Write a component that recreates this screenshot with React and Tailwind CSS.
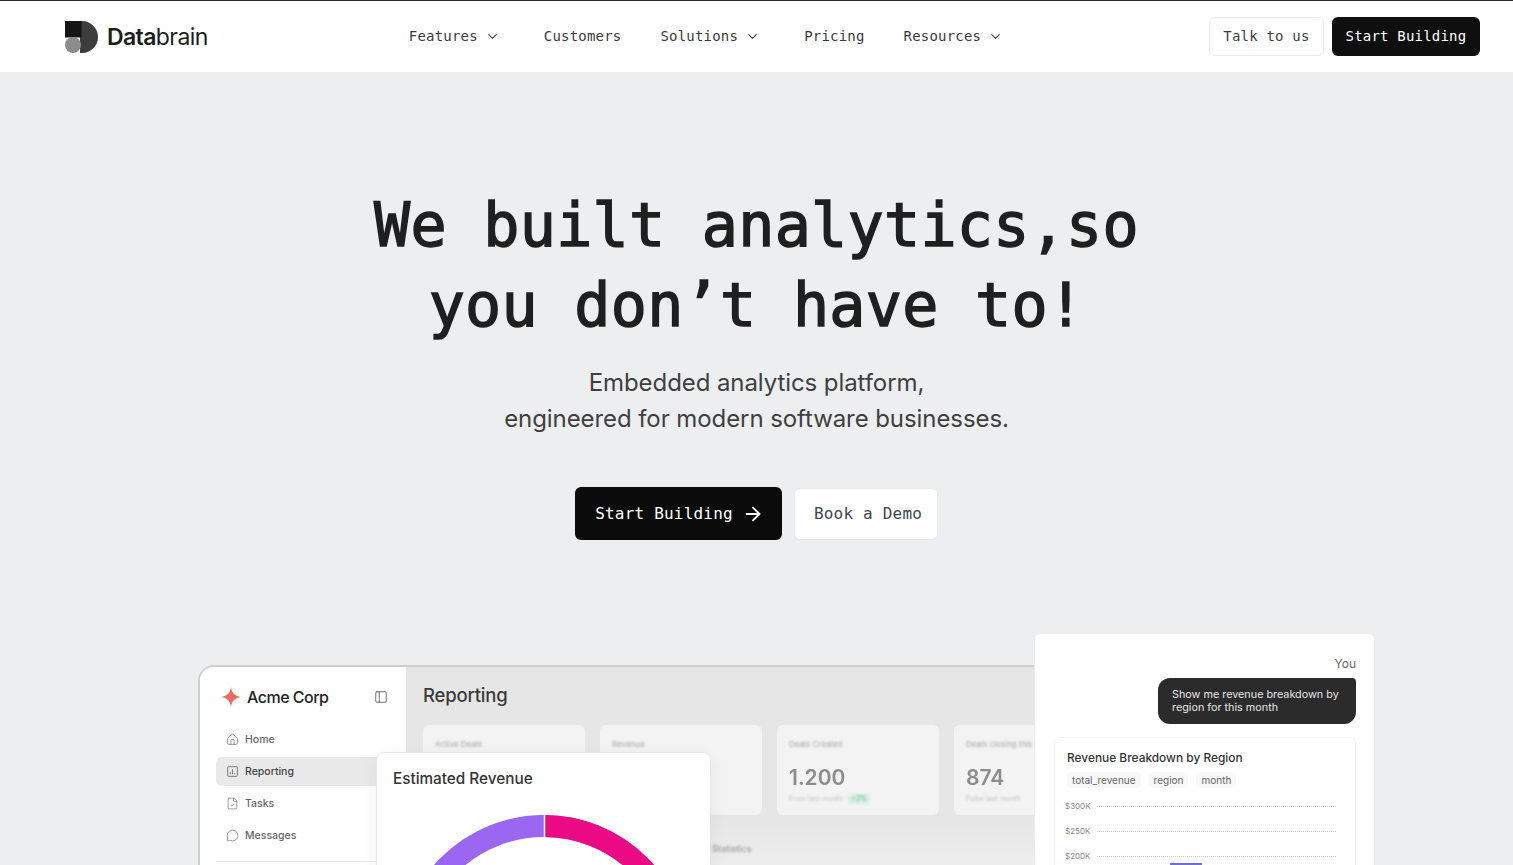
import React from 'react';
import { ArrowRight, ChevronDown, FileCheck, House, MessageCircle, PanelLeft } from 'lucide-react';

const mono = "font-['DejaVu_Sans_Mono','Liberation_Mono',monospace]";

const ReportIcon = ({ size, strokeWidth }) => (
    <svg width={size} height={size} viewBox="0 0 24 24" fill="none" stroke="currentColor" strokeWidth={strokeWidth} aria-hidden="true">
        <rect x="3" y="3" width="18" height="18" rx="2" />
        <path d="M8 17v-4M12 17V8M16 17v-2" />
    </svg>
);

const navItems = [
    { label: 'Features', menu: true },
    { label: 'Customers' },
    { label: 'Solutions', menu: true },
    { label: 'Pricing' },
    { label: 'Resources', menu: true },
];

const sideItems = [
    { label: 'Home', Icon: House },
    { label: 'Reporting', Icon: ReportIcon, active: true },
    { label: 'Tasks', Icon: FileCheck },
    { label: 'Messages', Icon: MessageCircle },
];

const stats = [
    { label: 'Active Deals' },
    { label: 'Revenue' },
    { label: 'Deals Created', value: '1.200', note: 'From last month', badge: '+3%' },
    { label: 'Deals closing this', value: '874', note: 'Pulse last month' },
];

const Logo = () => (
    <svg width="34" height="34" viewBox="0 0 34 34" aria-hidden="true">
        <path d="M16 1h2a16 16 0 0 1 0 32h-2z" fill="#3d3d3d" />
        <rect x="1" y="1" width="16.500" height="16.500" fill="#151515" />
        <circle cx="9" cy="25" r="8" fill="#8c8c8c" />
    </svg>
);

const Header = () => (
    <header className="h-[72px] bg-white border-t border-[#2b2b2b] flex items-center justify-between pl-[64px] pr-[33px]">
        <div className="flex items-center gap-[9px] w-[144px]">
            <Logo />
            <div className="font-['Inter',sans-serif] text-[23px] tracking-[-0.6px] text-[#1c1c1c] whitespace-nowrap mt-[2px]">
                <span className="font-semibold">Data</span>brain
            </div>
        </div>
        <nav className={`${mono} flex items-center gap-[39px] text-[14px] tracking-[0.2px] text-[#3a3a3a]`}>
            {navItems.map((item) => (
                <div key={item.label} className={`flex items-center gap-[7px] ${item.menu ? 'pr-[5px]' : ''}`}>
                    <span>{item.label}</span>
                    {item.menu && <ChevronDown size={15} strokeWidth={1.7} />}
                </div>
            ))}
        </nav>
        <div className={`${mono} flex items-center gap-2 text-[14px] tracking-[0.2px]`}>
            <button className="h-[39px] w-[115px] rounded-md bg-white border border-[#ececec] text-[#3a3f47]">Talk to us</button>
            <button className="h-[39px] w-[148px] rounded-md bg-[#0f0f0f] text-white">Start Building</button>
        </div>
    </header>
);

const Hero = () => (
    <section className="flex flex-col items-center pt-[113px]">
        <h1 className={`${mono} text-[60px] leading-[80px] tracking-[0.3px] font-normal text-[#1f1f1f] text-center [-webkit-text-stroke:1.5px_#1f1f1f]`}>
            We built analytics,so
            <br />
            you don’t have to!
        </h1>
        <p className="font-['Inter',sans-serif] text-[24px] leading-[36px] tracking-[-0.08px] text-[#3f3f3f] text-center mt-[20px]">
            Embedded analytics platform,
            <br />
            engineered for modern software businesses.
        </p>
        <div className={`${mono} flex items-center gap-3 mt-[50px] text-[16px] tracking-[0.2px]`}>
            <button className="h-[53px] w-[207px] rounded-md bg-[#0b0b0b] text-white flex items-center justify-center gap-[9px] pl-[2px]">
                Start Building
                <ArrowRight size={22} strokeWidth={2} />
            </button>
            <button className="h-[52px] w-[144px] rounded-md bg-white border border-[#e9e9e9] text-[#3f4450] pl-[4px]">Book a Demo</button>
        </div>
    </section>
);

const Sidebar = () => (
    <aside className="w-[206px] shrink-0 bg-white pl-[16px]">
        <div className="flex items-center h-[60px] pl-[5px] pr-[18px] justify-between">
            <div className="flex items-center gap-[6px]">
                <svg width="20" height="20" viewBox="0 0 20 20" aria-hidden="true">
                    <path d="M10 0c.8 5.800 3.200 8.800 10 10-6.800 1.200-9.200 4.200-10 10-.8-5.800-3.200-8.800-10-10 6.800-1.200 9.200-4.200 10-10z" fill="#ee6a62" />
                </svg>
                <span className="font-['Inter',sans-serif] text-[16px] font-medium tracking-[-0.5px] text-[#222]">Acme Corp</span>
            </div>
            <PanelLeft size={14} strokeWidth={1.4} className="text-[#555]" />
        </div>
        <div className="flex flex-col gap-[3px] -mt-[2px]">
            {sideItems.map(({ label, Icon, active }) => (
                <div
                    key={label}
                    className={`h-[29px] rounded-l-md flex items-center gap-[6px] pl-[10px] font-['Inter',sans-serif] text-[10.500px] font-medium ${active ? 'bg-[#e9e9e9] text-[#444]' : 'text-[#666]'}`}
                >
                    <Icon size={13} strokeWidth={1.2} />
                    {label}
                </div>
            ))}
        </div>
        <div className="h-px bg-[#ececec] mt-[11px]" />
    </aside>
);

const StatCard = ({ label, value, note, badge }) => (
    <div className="w-[162px] h-[90px] shrink-0 rounded-md bg-[#f3f3f3] px-[12px] pt-[13px] font-['Inter',sans-serif] text-[#a5a5a5]">
        <div className="text-[8px] leading-[12px] blur-[1px] whitespace-nowrap">{label}</div>
        {value && <div className="mt-[14px] text-[21px] leading-[28px] font-semibold text-[#8d8d8d] blur-[0.5px]">{value}</div>}
        {note && (
            <div className="mt-[2px] flex items-center gap-[6px] text-[7px] leading-[10px] text-[#c2c2c2] blur-[1px]">
                {note}
                {badge && <span className="rounded-sm bg-[#d5efe1] px-[3px] text-[#6fb994]">{badge}</span>}
            </div>
        )}
    </div>
);

const ReportingPanel = () => (
    <div className="w-[1120px] h-[230px] flex rounded-t-[16px] border-2 border-b-0 border-[#cfcfcf] overflow-hidden">
        <Sidebar />
        <div className="flex-1 pl-[17px] bg-gradient-to-b from-[#e6e6e6] via-[#e6e6e6] via-[65%] to-[#f1f1f1]">
            <div className="h-[58px] flex items-center font-['Inter',sans-serif] text-[18.500px] font-medium tracking-[-0.2px] text-[#3a3a3a]">Reporting</div>
            <div className="flex gap-[15px]">
                {stats.map((stat) => (
                    <StatCard key={stat.label} {...stat} />
                ))}
            </div>
            <div className="mt-[27px] ml-[289px] font-['Inter',sans-serif] text-[9px] font-medium text-[#999] blur-[0.8px]">Statistics</div>
        </div>
    </div>
);

const RevenueCard = () => (
    <div className="absolute left-[178px] top-[87px] w-[335px] h-[160px] rounded-lg bg-white border border-[#e8e8e8] shadow-[0_4px_18px_rgba(0,0,0,0.06)] overflow-hidden">
        <div className="pl-[16px] pt-[15px] font-['Inter',sans-serif] text-[15.300px] font-medium text-[#333]">Estimated Revenue</div>
        <svg width="335" height="120" viewBox="0 0 335 120" className="absolute left-0 top-[60px]" aria-hidden="true">
            {/* donut center sits below the fold of the page */}
            <circle cx="167" cy="148" r="135" fill="none" stroke="#9a66f2" strokeWidth="22" />
            <path d="M168 13A135 135 0 0 1 302 148" fill="none" stroke="#ec0a84" strokeWidth="22" />
            <line x1="167.500" y1="0" x2="167.500" y2="25" stroke="#fff" strokeWidth="1.500" />
        </svg>
    </div>
);

const ChatCard = () => (
    <div className="absolute left-[836px] top-[-32px] w-[341px] h-[240px] rounded-md bg-white border border-[#ececec] pl-[19px] pr-[18px] pt-[22px] font-['Inter',sans-serif]">
        <div className="text-right text-[12px] leading-[16px] text-[#666]">You</div>
        <div className="ml-auto mt-[6px] w-[198px] h-[46px] rounded-xl rounded-tr-sm bg-[#2b2b2b] pl-[14px] pt-[10px] text-[10.800px] leading-[13px] text-[#e6e6e6]">
            Show me revenue breakdown by region for this month
        </div>
        <div className="mt-[13px] rounded-t-md border border-b-0 border-[#f3f3f3] pl-[12px] pr-[19px] pt-[12px]">
            <div className="text-[11.900px] leading-[16px] font-medium text-[#333]">Revenue Breakdown by Region</div>
            <div className="mt-[6px] flex gap-[8px] text-[10px] leading-[14px] text-[#666]">
                <span className="rounded bg-[#f8f8f8] px-[5px] py-[1px]">total_revenue</span>
                <span className="rounded bg-[#f8f8f8] px-[5px] py-[1px]">region</span>
                <span className="rounded bg-[#f8f8f8] px-[5px] py-[1px]">month</span>
            </div>
            <div className="mt-[11px] -ml-[2px] flex flex-col gap-[11px]">
                {['$300K', '$250K', '$200K'].map((tick) => (
                    <div key={tick} className="flex items-center gap-[8px] h-[14px] text-[8px] text-[#888]">
                        <span className="w-[24px]">{tick}</span>
                        <div className="flex-1 border-t border-dotted border-[#cfcfcf]" />
                    </div>
                ))}
            </div>
            <div className="ml-[103px] mt-[0px] w-[32px] h-[8px] bg-[#6f6fd8]" />
        </div>
    </div>
);

const App = () => (
    <div className="h-[865px] overflow-hidden bg-[#edeef0]">
        <Header />
        <Hero />
        <div className="relative ml-[198px] mt-[125px] w-fit">
            <ReportingPanel />
            <RevenueCard />
            <ChatCard />
        </div>
    </div>
);

export default App;
